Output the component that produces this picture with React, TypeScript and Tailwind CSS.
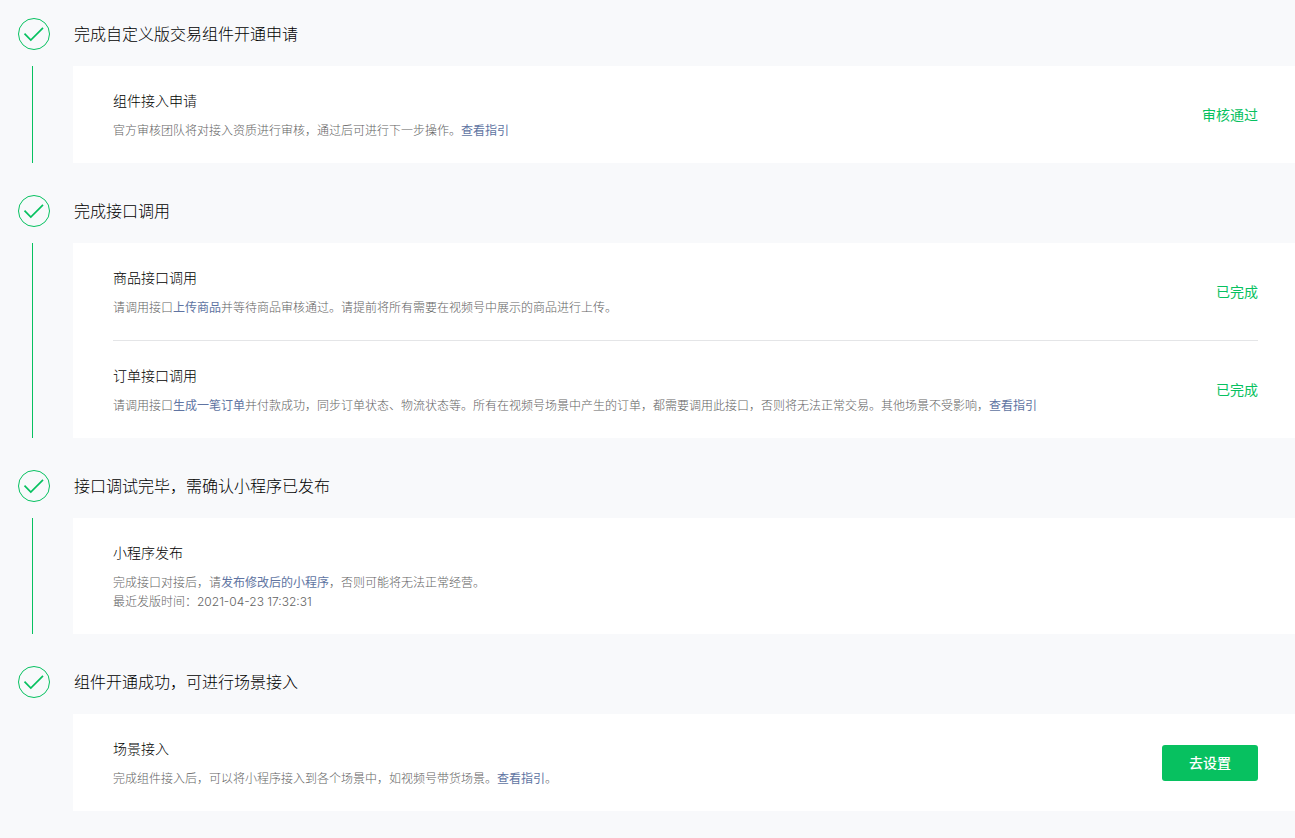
import type { ReactNode } from "react";

function CheckIcon() {
  return (
    <svg width="32" height="32" viewBox="0 0 32 32" fill="none" stroke="#07c160" className="shrink-0" aria-hidden="true">
      <circle cx="16" cy="16" r="15.5" />
      <path d="M6.5 15.6 L12.8 22 L25 9.8" strokeWidth="1.7" />
    </svg>
  );
}

function Link({ children }: { children: ReactNode }) {
  return (
    <a href="#" className="font-normal text-[#6074a2]">
      {children}
    </a>
  );
}

function Status({ children }: { children: ReactNode }) {
  return <span className="shrink-0 text-sm text-[#07c160]">{children}</span>;
}

type StepProps = {
  title: string;
  last?: boolean;
  children: ReactNode;
};

function Step({ title, last = false, children }: StepProps) {
  return (
    <section>
      <div className="flex items-center gap-6 pl-[18px]">
        <CheckIcon />
        <h2 className="text-base font-light text-black">{title}</h2>
      </div>
      <div className="mt-4 flex">
        <div className="flex w-[73px] shrink-0 pl-8">
          {!last && <div className="w-px bg-[#07c160]" />}
        </div>
        <div className="flex-1 divide-y divide-[#e4e5e7] bg-white pl-10 pr-[37px]">{children}</div>
      </div>
    </section>
  );
}

type ItemProps = {
  title: string;
  action?: ReactNode;
  children: ReactNode;
};

function Item({ title, action, children }: ItemProps) {
  return (
    <div className="flex items-center justify-between gap-6 pt-6 pb-[23px]">
      <div>
        <h3 className="text-sm leading-[22px] font-light text-black">{title}</h3>
        <div className="mt-[9px] text-xs leading-[19px] font-light text-[#636363]">{children}</div>
      </div>
      {action}
    </div>
  );
}

export default function App() {
  return (
    <main className="flex min-h-screen flex-col gap-8 bg-[#f8f9fb] py-[18px] font-['Inter','Noto_Sans_CJK_SC',sans-serif]" lang="zh-CN">
      <Step title="完成自定义版交易组件开通申请">
        <Item title="组件接入申请" action={<Status>审核通过</Status>}>
          官方审核团队将对接入资质进行审核，通过后可进行下一步操作。<Link>查看指引</Link>
        </Item>
      </Step>

      <Step title="完成接口调用">
        <Item title="商品接口调用" action={<Status>已完成</Status>}>
          请调用接口<Link>上传商品</Link>并等待商品审核通过。请提前将所有需要在视频号中展示的商品进行上传。
        </Item>
        <Item title="订单接口调用" action={<Status>已完成</Status>}>
          请调用接口<Link>生成一笔订单</Link>
          并付款成功，同步订单状态、物流状态等。所有在视频号场景中产生的订单，都需要调用此接口，否则将无法正常交易。其他场景不受影响，
          <Link>查看指引</Link>
        </Item>
      </Step>

      <Step title="接口调试完毕，需确认小程序已发布">
        <Item title="小程序发布">
          <p>
            完成接口对接后，请<Link>发布修改后的小程序</Link>，否则可能将无法正常经营。
          </p>
          <p>最近发版时间：2021-04-23 17:32:31</p>
        </Item>
      </Step>

      <Step title="组件开通成功，可进行场景接入" last>
        <Item
          title="场景接入"
          action={
            <button type="button" className="h-9 w-24 shrink-0 rounded-[3px] bg-[#07c160] text-sm font-medium text-white">
              去设置
            </button>
          }
        >
          完成组件接入后，可以将小程序接入到各个场景中，如视频号带货场景。<Link>查看指引</Link>。
        </Item>
      </Step>
    </main>
  );
}
